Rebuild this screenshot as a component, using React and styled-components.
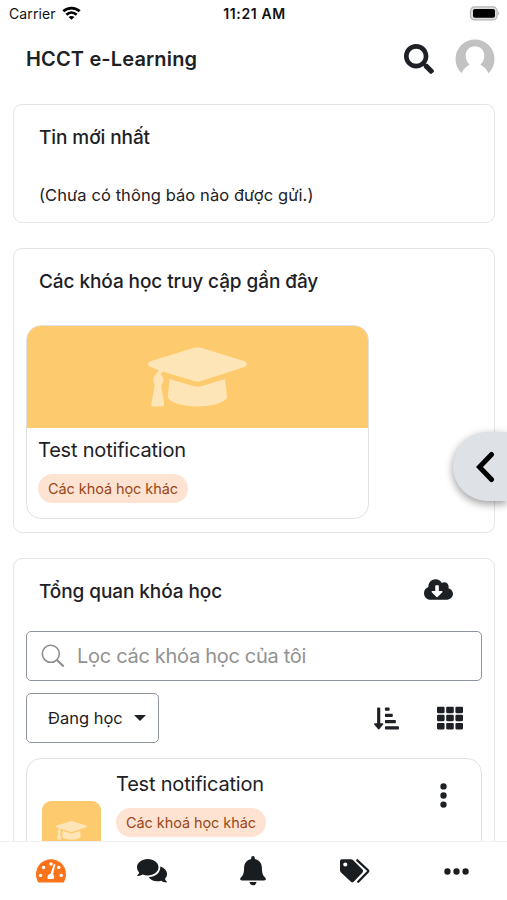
import styled, { createGlobalStyle } from "styled-components";
import { FaSearch, FaCloudDownloadAlt, FaSortAmountDownAlt, FaTh } from "react-icons/fa";
import { FaEllipsis, FaEllipsisVertical } from "react-icons/fa6";

export default function App() {
  return (
    <>
      <GlobalStyle />
      <Screen>
        <StatusBar>
          <Carrier>
            Carrier
            <svg width="19" height="15" viewBox="0 0 20 15" fill="none" stroke="#000" strokeWidth="2.9">
              <path d="M1.4 5.2C6.3 .6 13.7 .6 18.6 5.2" />
              <path d="M4.6 8.8C7.8 5.8 12.2 5.8 15.4 8.8" />
              <path d="M10 14.2L6.9 11.2C8.8 9.7 11.2 9.7 13.1 11.2Z" fill="#000" stroke="none" />
            </svg>
          </Carrier>
          <Clock>11:21 AM</Clock>
          <Battery>
            <svg width="32" height="15" viewBox="0 0 32 15">
              <rect x="1.5" y="0.9" width="26.6" height="13" rx="4" fill="#ddd" stroke="#b5b5b5" strokeWidth="1.2" />
              <rect x="4" y="3" width="22" height="8.8" rx="1.8" fill="#000" />
              <path d="M29.3 5.2Q31.3 7.4 29.3 9.6Z" fill="#aaa" />
            </svg>
          </Battery>
        </StatusBar>
        <Header>
          <h1>HCCT e-Learning</h1>
          <FaSearch size="30px" />
          <Avatar viewBox="0 0 40 40">
            <circle cx="20" cy="20" r="19.5" fill="#c2c2c2" />
            <path
              d="M6.5 34.8C8.5 29 12 27.5 14.7 25.6C12 23.3 10.7 20 10.7 16.5C10.7 11 15 7.3 20 7.3S29.3 11 29.3 16.5C29.3 20 28 23.3 25.3 25.6C28 27.5 31.5 29 33.5 34.8L34 40H6Z"
              fill="#fff"
            />
          </Avatar>
        </Header>
        <Main>
          <Block height="119px">
            <BlockTitle>Tin mới nhất</BlockTitle>
            <News>(Chưa có thông báo nào được gửi.)</News>
          </Block>
          <Block height="285px">
            <BlockTitle>Các khóa học truy cập gần đây</BlockTitle>
            <CourseCard>
              <Cover>
                <CapIcon width="99" />
              </Cover>
              <CourseInfo>
                <CourseName>Test notification</CourseName>
                <Category>Các khoá học khác</Category>
              </CourseInfo>
            </CourseCard>
          </Block>
          <Block height="340px">
            <TitleRow>
              <BlockTitle>Tổng quan khóa học</BlockTitle>
              <FaCloudDownloadAlt size="29px" />
            </TitleRow>
            <SearchBox>
              <svg width="24" height="24" viewBox="0 0 24 24" fill="none" stroke="#8a8c8f" strokeWidth="1.6">
                <circle cx="9.8" cy="9.8" r="8.5" />
                <path d="M16 16L22.7 22.5" strokeWidth="2" />
              </svg>
              <input placeholder="Lọc các khóa học của tôi" />
            </SearchBox>
            <Tools>
              <Select>
                Đang học
                <Caret />
              </Select>
              <FaSortAmountDownAlt size="25px" />
              <FaTh size="26px" />
            </Tools>
            <ListItem>
              <Thumb>
                <CapIcon width="31" />
              </Thumb>
              <ItemInfo>
                <CourseName>Test notification</CourseName>
                <Category>Các khoá học khác</Category>
              </ItemInfo>
              <FaEllipsisVertical size="29px" />
            </ListItem>
          </Block>
        </Main>
        <TabBar>
          <Tab $active>
            <GaugeIcon />
          </Tab>
          <Tab>
            <CommentsIcon />
          </Tab>
          <Tab>
            <BellIcon />
          </Tab>
          <Tab>
            <TagsIcon />
          </Tab>
          <Tab>
            <FaEllipsis size="29px" />
          </Tab>
        </TabBar>
        <DrawerButton>
          <svg width="20" height="32" viewBox="0 0 20 32" fill="none" stroke="#000" strokeWidth="5" strokeLinecap="round">
            <path d="M16.5 3.5L4.5 16L16.5 28.5" strokeLinejoin="miter" />
          </svg>
        </DrawerButton>
      </Screen>
    </>
  );
}

function CapIcon({ width }) {
  return (
    <svg width={width} viewBox="0 0 99 60" fill="currentColor">
      <path d="M46 .8Q49.500 0 53 .8L96.500 14.300Q99 15.500 99 17.200T96.500 20L53 34Q49.500 35 46 34L14.800 24.500L12.900 27.500Q15.800 30.500 15.200 34Q14.800 36.500 13.200 38.500L16.200 57Q16.300 59.300 14.200 59.500H5.200Q3 59.300 3.300 57L6.800 38.500Q4.500 35.500 5.300 32Q5.700 29.500 8.200 27L10.800 23.200L2.500 20Q0 19 0 17.200T2.500 14.300Z" />
      <path d="M21.500 32L46 39.200Q49.500 40 53 39.200L77 32L79 50.500Q77 54.500 67 57.500Q49 61.500 32 57.500Q21.500 54.500 19.800 50.500Z" />
    </svg>
  );
}

function GaugeIcon() {
  return (
    <svg width="30" height="24" viewBox="0 0 30 24" fill="currentColor">
      <path d="M2.300 23.500C.8 21 0 18.200 0 15.200C0 6.600 6.700 .2 15 .2S30 6.600 30 15.200C30 18.200 29.200 21 27.700 23.500Z" />
      <g fill="#fff">
        <circle cx="15" cy="5" r="1.700" />
        <circle cx="7.600" cy="8.500" r="1.700" />
        <circle cx="4.600" cy="16.400" r="1.700" />
        <circle cx="22.700" cy="8.500" r="1.700" />
        <circle cx="25.300" cy="16.400" r="1.700" />
        <path d="M17.800 4.900L19.400 5.400L17.100 15.300C19 17.200 18.300 19.500 17 20H11.800C10.700 17.400 12.500 15 14.600 14.800Z" />
      </g>
    </svg>
  );
}

function CommentsIcon() {
  return (
    <svg width="30" height="24" viewBox="0 0 30 24" fill="currentColor">
      <path d="M10.800 0C4.800 0 0 3.700 0 8.300C0 10.200 .8 12 2.200 13.400C1.800 14.700 .9 15.600 .2 16.200C0 16.600 .2 17 .7 17C2.800 17 4.500 16.200 5.700 15.500C7.300 16.100 9 16.500 10.800 16.500C16.800 16.500 21.500 12.800 21.500 8.300S16.800 0 10.800 0Z" />
      <path d="M23.200 7.400C24 13 19.200 18 11.700 18.200C13.600 21.200 19.200 23.400 24.300 21.800C25.500 22.700 27.400 23.400 29.300 23.400C29.800 23.400 30 23 29.800 22.600C29 22 28.300 21.100 27.900 19.800C31.700 16 30.500 9.700 23.200 7.400Z" />
    </svg>
  );
}

function BellIcon() {
  return (
    <svg width="26" height="30" viewBox="0 0 26 30" fill="currentColor">
      <path d="M13 0C11.900 0 11.200 .8 11.200 1.900V2.900C6.900 3.700 4.100 7.100 4.100 11.700C4.100 17 3 19.500 .9 21.600C-.5 23.100 .2 24.400 1.900 24.400H24.100C25.800 24.400 26.500 23.100 25.100 21.600C23 19.500 21.900 17 21.900 11.700C21.900 7.100 19.100 3.700 14.800 2.900V1.900C14.800 .8 14.100 0 13 0Z" />
      <path d="M9.500 26.100H16.500C16.300 28 15 29.300 13 29.300S9.700 28 9.500 26.100Z" />
    </svg>
  );
}

function TagsIcon() {
  return (
    <svg width="30" height="24" viewBox="0 0 30 24" fill="none">
      <path
        d="M2 .2H10.800Q12.100 .2 13 1.100L22.500 10.600Q23.800 12 22.500 13.400L13.700 22.700Q12.300 24 10.900 22.700L1 13.500Q0 12.500 0 11.200V2.200Q0 .2 2 .2ZM5.300 3.400A2.100 2.100 0 1 0 5.300 7.600A2.100 2.100 0 1 0 5.300 3.400Z"
        fill="currentColor"
        fillRule="evenodd"
      />
      <path d="M17.300 1.300L27.700 11Q28.700 12 27.700 13L18.200 22.700" stroke="currentColor" strokeWidth="2.300" strokeLinecap="round" />
    </svg>
  );
}

const GlobalStyle = createGlobalStyle`
  * {
    box-sizing: border-box;
  }
  body {
    margin: 0;
    background-color: #ffffff;
    color: #1d2125;
    font-family: "Inter", sans-serif;
  }
  h1, h2, h3, p {
    margin: 0;
  }
  svg {
    flex-shrink: 0;
  }
`;

const Screen = styled.div`
  position: relative;
  width: 507px;
  height: 900px;
  display: flex;
  flex-direction: column;
  overflow: hidden;
`;

const StatusBar = styled.div`
  height: 28px;
  flex-shrink: 0;
  display: grid;
  grid-template-columns: 1fr auto 1fr;
  align-items: center;
  padding: 0 7px 1px 9px;
  color: #111111;
`;

const Carrier = styled.div`
  display: flex;
  align-items: center;
  gap: 6px;
  font-size: 14px;
  letter-spacing: 0.1px;
`;

const Clock = styled.div`
  font-size: 14px;
  font-weight: 600;
  letter-spacing: 0.6px;
`;

const Battery = styled.div`
  display: flex;
  justify-content: flex-end;
  margin-right: -1px;
`;

const Header = styled.header`
  height: 62px;
  flex-shrink: 0;
  display: flex;
  align-items: center;
  padding: 0 12px 0 26px;
  h1 {
    flex: 1;
    font-size: 20px;
    font-weight: 600;
    line-height: 24px;
    letter-spacing: 0.15px;
  }
`;

const Avatar = styled.svg`
  width: 40px;
  height: 40px;
  margin-left: 21px;
`;

const Main = styled.main`
  flex: 1;
  min-height: 0;
  overflow: hidden;
  display: flex;
  flex-direction: column;
  gap: 25px;
  padding: 14px 12px 0 13px;
`;

const Block = styled.section`
  height: ${(props) => props.height};
  flex-shrink: 0;
  border: 1px solid #e2e4e6;
  border-radius: 9px;
  padding: 20px 12px 0;
`;

const BlockTitle = styled.h2`
  padding-left: 13px;
  font-size: 19px;
  font-weight: 500;
  line-height: 26px;
  letter-spacing: -0.08px;
`;

const News = styled.p`
  padding: 32px 13px 0;
  font-size: 16.5px;
  line-height: 24px;
  letter-spacing: 0.08px;
`;

const CourseCard = styled.div`
  width: 343px;
  height: 194px;
  margin-top: 30px;
  border: 1px solid #dee2e6;
  border-radius: 15px;
  overflow: hidden;
`;

const Cover = styled.div`
  height: 102px;
  display: flex;
  align-items: center;
  justify-content: center;
  background-color: #fdcb6e;
  color: #fee5b7;
`;

const CourseInfo = styled.div`
  padding: 8px 11px;
`;

const CourseName = styled.h3`
  font-size: 20px;
  font-weight: 400;
  line-height: 28px;
  letter-spacing: -0.2px;
`;

const Category = styled.span`
  display: inline-flex;
  align-items: center;
  height: 29px;
  margin-top: 10px;
  padding: 0 10px;
  border-radius: 15px;
  background-color: #fee3d2;
  color: #984818;
  font-size: 14.5px;
  letter-spacing: -0.08px;
`;

const TitleRow = styled.div`
  height: 26px;
  display: flex;
  align-items: center;
  justify-content: space-between;
  padding-right: 29px;
  svg {
    margin-bottom: 5px;
  }
`;

const SearchBox = styled.label`
  height: 50px;
  margin-top: 26px;
  padding: 0 13px 0 14px;
  display: flex;
  align-items: center;
  gap: 12px;
  border: 1px solid #8f959e;
  border-radius: 5px;
  input {
    flex: 1;
    padding: 0;
    border: none;
    outline: none;
    font-family: "Inter", sans-serif;
    font-size: 20px;
    letter-spacing: -0.3px;
  }
  input::placeholder {
    color: #929292;
  }
`;

const Tools = styled.div`
  display: flex;
  align-items: center;
  gap: 38px;
  margin-top: 12px;
  padding-right: 19px;
`;

const Select = styled.div`
  width: 133px;
  height: 50px;
  margin-right: auto;
  padding: 0 12px 0 21px;
  display: flex;
  align-items: center;
  justify-content: space-between;
  border: 1px solid #8f959e;
  border-radius: 5px;
  font-size: 16.5px;
`;

const Caret = styled.span`
  border: 6px solid transparent;
  border-top-color: #1d2125;
  border-bottom: none;
`;

const ListItem = styled.div`
  display: flex;
  height: 160px;
  margin-top: 15px;
  padding: 0 32px 0 15px;
  border: 1px solid #dee2e6;
  border-radius: 15px;
  > svg {
    margin: 22px -9px 0 0;
  }
`;

const Thumb = styled.div`
  width: 59px;
  height: 59px;
  margin-top: 42px;
  display: flex;
  align-items: center;
  justify-content: center;
  border-radius: 9px;
  background-color: #fdcb6e;
  color: #fee5b7;
`;

const ItemInfo = styled.div`
  flex: 1;
  padding: 11px 0 0 15px;
`;

const TabBar = styled.nav`
  height: 59px;
  flex-shrink: 0;
  display: grid;
  grid-template-columns: repeat(5, 1fr);
  border-top: 1px solid #f1f1f1;
  background-color: #ffffff;
`;

const Tab = styled.div`
  display: flex;
  align-items: center;
  justify-content: center;
  color: ${(props) => (props.$active ? "#f9731a" : "#1a1d20")};
`;

/* sits over the page, stuck to the right edge */
const DrawerButton = styled.div`
  position: absolute;
  top: 432px;
  right: 0;
  width: 54px;
  height: 69px;
  display: flex;
  align-items: center;
  padding-left: 22px;
  border-radius: 35px 0 0 35px;
  background-color: #dee2e6;
  box-shadow: 0 3px 9px rgba(0, 0, 0, 0.4);
`;
